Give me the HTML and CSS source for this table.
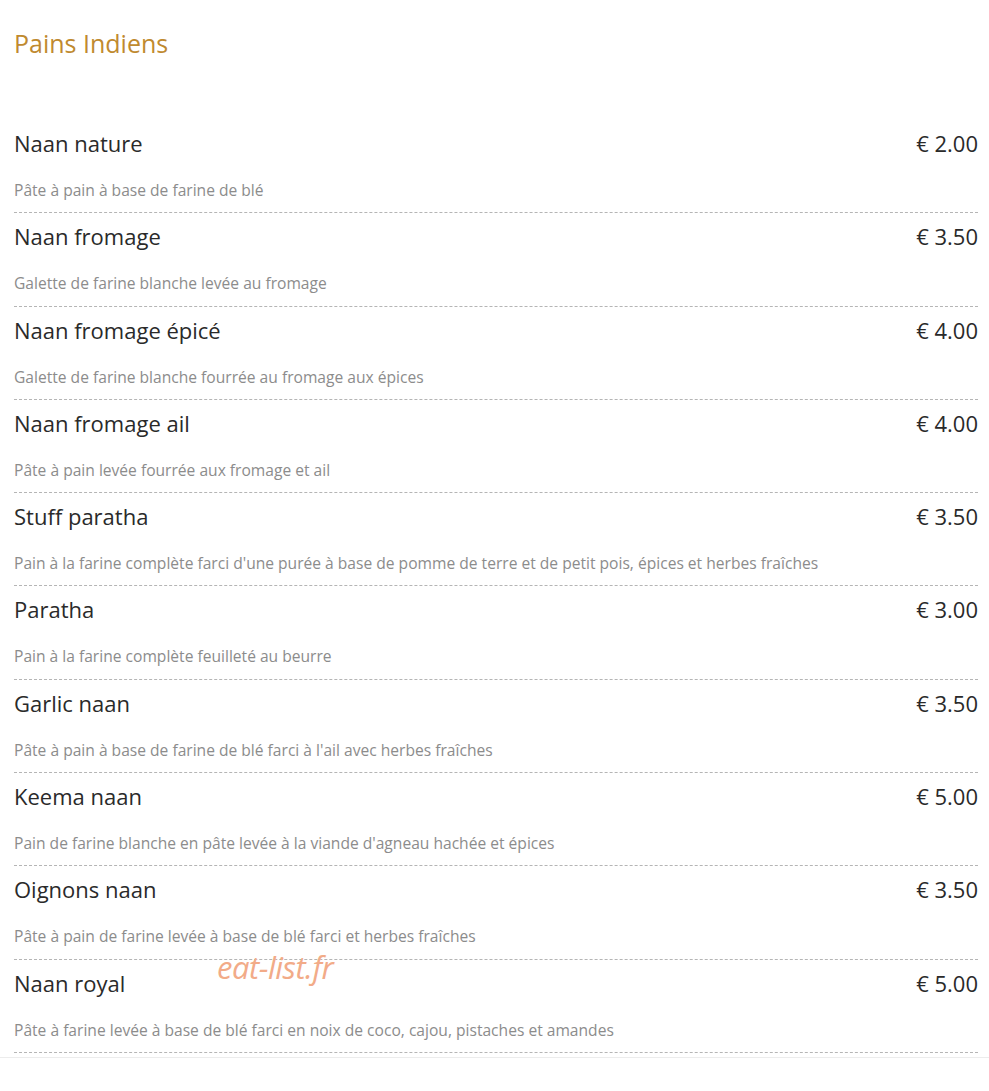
FILE: index.html
```html
<!DOCTYPE html>
<html lang="fr">
<head>
  <meta charset="UTF-8">
  <meta name="viewport" content="width=device-width, initial-scale=1.0">
  <title>Pains Indiens</title>
  <link rel="stylesheet" href="styles.css">
</head>
<body>
  <div class="menu">
    <h2 class="menu-title">Pains Indiens</h2>

    <div class="items">
      <div class="item">
        <div class="item-head"><span class="name">Naan nature</span><span class="price">€ 2.00</span></div>
        <p class="desc">Pâte à pain à base de farine de blé</p>
      </div>
      <div class="item">
        <div class="item-head"><span class="name">Naan fromage</span><span class="price">€ 3.50</span></div>
        <p class="desc">Galette de farine blanche levée au fromage</p>
      </div>
      <div class="item">
        <div class="item-head"><span class="name">Naan fromage épicé</span><span class="price">€ 4.00</span></div>
        <p class="desc">Galette de farine blanche fourrée au fromage aux épices</p>
      </div>
      <div class="item">
        <div class="item-head"><span class="name">Naan fromage ail</span><span class="price">€ 4.00</span></div>
        <p class="desc">Pâte à pain levée fourrée aux fromage et ail</p>
      </div>
      <div class="item">
        <div class="item-head"><span class="name">Stuff paratha</span><span class="price">€ 3.50</span></div>
        <p class="desc">Pain à la farine complète farci d'une purée à base de pomme de terre et de petit pois, épices et herbes fraîches</p>
      </div>
      <div class="item">
        <div class="item-head"><span class="name">Paratha</span><span class="price">€ 3.00</span></div>
        <p class="desc">Pain à la farine complète feuilleté au beurre</p>
      </div>
      <div class="item">
        <div class="item-head"><span class="name">Garlic naan</span><span class="price">€ 3.50</span></div>
        <p class="desc">Pâte à pain à base de farine de blé farci à l'ail avec herbes fraîches</p>
      </div>
      <div class="item">
        <div class="item-head"><span class="name">Keema naan</span><span class="price">€ 5.00</span></div>
        <p class="desc">Pain de farine blanche en pâte levée à la viande d'agneau hachée et épices</p>
      </div>
      <div class="item">
        <div class="item-head"><span class="name">Oignons naan</span><span class="price">€ 3.50</span></div>
        <p class="desc">Pâte à pain de farine levée à base de blé farci et herbes fraîches</p>
      </div>
      <div class="item">
        <div class="item-head"><span class="name">Naan royal</span><span class="price">€ 5.00</span></div>
        <p class="desc">Pâte à farine levée à base de blé farci en noix de coco, cajou, pistaches et amandes</p>
      </div>
    </div>

    <span class="watermark">eat-list.fr</span>
  </div>
</body>
</html>
```

FILE: styles.css
```css
body { margin: 0; background: #fff; font-family: "Open Sans", "Noto Sans", sans-serif; color: #333; }
.menu { position: relative; padding: 0 11px 4px 14px; border-bottom: 1px solid #ececec; box-shadow: 0 1px 2px rgba(0,0,0,0.06); }
.menu-title { margin: 0; padding-top: 26px; height: 120px; box-sizing: border-box; font-size: 25px; font-weight: 400; line-height: 34px; color: #bf8a2f; }
.item { padding: 8px 0 12.3px; border-bottom: 1px dashed #b5b5b5; }
.item-head { display: flex; justify-content: space-between; align-items: center; height: 30px; font-size: 22px; line-height: 30px; color: #2a2a2a; }
.desc { margin: 22px 0 0; font-size: 15.6px; font-weight: 500; line-height: 20px; color: #8c8c8c; }
.watermark { position: absolute; left: 217px; top: 946px; font-size: 31px; font-style: italic; color: #f2ab88; letter-spacing: -0.5px; }
```
